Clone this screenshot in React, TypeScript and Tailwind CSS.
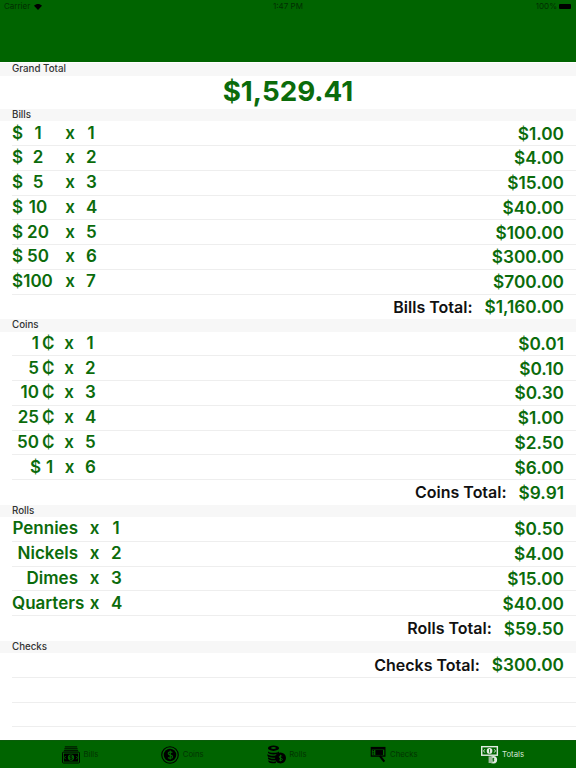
import React from 'react'

const bills = [
  ['1', '1', '$1.00'],
  ['2', '2', '$4.00'],
  ['5', '3', '$15.00'],
  ['10', '4', '$40.00'],
  ['20', '5', '$100.00'],
  ['50', '6', '$300.00'],
  ['100', '7', '$700.00'],
]

const coins = [
  ['1', '2', '$0.01', '1'],
  ['5', '2', '$0.10', '2'],
  ['10', '2', '$0.30', '3'],
  ['25', '2', '$1.00', '4'],
  ['50', '2', '$2.50', '5'],
]

const rolls = [
  ['Pennies', '1', '$0.50'],
  ['Nickels', '2', '$4.00'],
  ['Dimes', '3', '$15.00'],
  ['Quarters', '4', '$40.00'],
]

function SectionHeader({ title }: { title: string }) {
  return (
    <div className="h-[12.25px] bg-[#f7f7f7] pl-3 text-[9.75px] font-medium leading-[12.25px] text-[#333333]">{title}</div>
  )
}

function Row({ children, value }: { children: React.ReactNode; value: string }) {
  return (
    <div className="ml-3 flex h-[24.75px] items-center justify-between border-b border-[#eeeeee] pr-3 leading-none text-[#0b6b0b]">
      <div className="flex items-center text-[17px] font-semibold">{children}</div>
      <div className="text-[17.25px] font-semibold">{value}</div>
    </div>
  )
}

function TotalRow({ label, value, line }: { label: string; value: string; line?: boolean }) {
  return (
    <div className={`ml-3 flex h-[24.75px] items-center justify-end gap-3 pr-3 font-semibold leading-none ${line ? 'border-b border-[#eeeeee]' : ''}`}>
      <span className="text-[16px] text-[#111111]">{label}</span>
      <span className="text-[17.25px] text-[#0b6b0b]">{value}</span>
    </div>
  )
}

function Times({ n, width }: { n: string; width: string }) {
  return (
    <>
      <span className={`text-center ${width}`}>x</span>
      <span className="w-[10px] text-center">{n}</span>
    </>
  )
}

function BillsIcon() {
  return (
    <svg viewBox="0 0 19 19" className="h-[19px] w-[18px]" fill="none" stroke="#000000">
      <path d="M3 1.500h13M2.500 3.500h14M2 5.500h15" strokeWidth="1" />
      <rect x="0.500" y="7" width="18" height="11.500" rx="1" strokeWidth="1" />
      <rect x="2" y="8.500" width="15" height="8.500" fill="#000000" stroke="none" />
      <circle cx="9.500" cy="12.700" r="3.300" fill="#006400" stroke="none" />
      <path d="M4 11l-1.500 1.700L4 14.500M15 11l1.500 1.700L15 14.500" stroke="#006400" strokeWidth="1" />
      <path d="M10.800 11.200c-.8-.7-2.500-.5-2.500.6 0 1.300 2.600.7 2.600 2 0 1.100-1.800 1.200-2.700.5M9.500 10v5.400" stroke="#000000" strokeWidth="0.700" />
    </svg>
  )
}

function CoinsIcon() {
  return (
    <svg viewBox="0 0 19 19" className="h-[18px] w-[18px]" fill="none">
      <circle cx="9.500" cy="9.500" r="8.700" stroke="#000000" strokeWidth="1.200" />
      <circle cx="9.500" cy="9.500" r="6.600" fill="#000000" />
      <path d="M12 6.900c-1.300-1.200-4.400-.9-4.400 1 0 2.300 4.600 1.200 4.600 3.400 0 2-3.200 2.100-4.800.9M9.800 4.800v9.400" stroke="#006400" strokeWidth="1.200" />
    </svg>
  )
}

function RollsIcon() {
  return (
    <svg viewBox="0 0 19 19" className="h-[19px] w-[19px]" fill="none">
      <ellipse cx="6.500" cy="3.200" rx="5.500" ry="2.700" fill="#000000" />
      <ellipse cx="6.500" cy="3" rx="2.400" ry="1" fill="#006400" />
      <path d="M1 6.200c1 2.200 10 2.200 11 0v1.600c-1 2.200-10 2.200-11 0zM.5 9c1 2.200 9 2.400 10 .6v1.800c-1 1.800-9 1.600-10-.4zM1 12c1 2 7 2.200 8 1.200v1.700c-1 1-7 .8-8-1.200zM1.500 15c1 1.800 6 2.100 7.500 1.300V18c-1.500.7-6.500.5-7.500-1.300z" fill="#000000" />
      <circle cx="13.500" cy="13" r="5.500" fill="#000000" />
      <path d="M15.200 11.300c-.8-.8-3-.7-3 .7 0 1.600 3.200.8 3.200 2.300 0 1.400-2.200 1.500-3.300.6M13.500 9.800v6.500" stroke="#006400" strokeWidth="1" />
    </svg>
  )
}

function ChecksIcon() {
  return (
    <svg viewBox="0 0 19 19" className="h-[19px] w-[17px]" fill="none">
      <rect x="0.800" y="1" width="16.500" height="11" fill="#000000" />
      <rect x="2" y="4" width="14" height="6.500" fill="#006400" />
      <path d="M3 5h1.500M3 7h1.500M3 9h1.500" stroke="#000000" strokeWidth="1" />
      <rect x="6" y="4.500" width="8.500" height="5.500" fill="#000000" />
      <path d="M11 11l5 6.500" stroke="#000000" strokeWidth="2.400" />
    </svg>
  )
}

function TotalsIcon() {
  return (
    <svg viewBox="0 0 19 19" className="h-[19px] w-[18px]" fill="none">
      <rect x="0" y="0.500" width="18" height="10.500" fill="#e2ebe2" />
      <rect x="1.500" y="2" width="15" height="7.500" fill="#006400" />
      <circle cx="9" cy="5.700" r="3" fill="#e2ebe2" />
      <path d="M4 4L2.700 5.700 4 7.500M14 4l1.300 1.700L14 7.500" stroke="#e2ebe2" strokeWidth="1" />
      <path d="M9 3.800v3.800" stroke="#006400" strokeWidth="0.900" />
      <circle cx="13" cy="15" r="4" fill="#e2ebe2" />
      <rect x="8" y="11.500" width="4" height="7" fill="#9db99d" />
      <path d="M13 13v4M14 13.700h-1.500v1.300h1v1.300H12" stroke="#006400" strokeWidth="0.800" />
    </svg>
  )
}

function Tab({ icon, label, active }: { icon: React.ReactNode; label: string; active?: boolean }) {
  return (
    <div className="flex items-center gap-[3.5px]">
      {icon}
      <span className={`text-[7.75px] leading-none ${active ? 'text-[#d6e4d6]' : 'text-[#023402]'}`}>{label}</span>
    </div>
  )
}

export default function App() {
  return (
    <div className="flex h-[768px] w-[576px] flex-col overflow-hidden bg-white font-['Inter','Liberation_Sans',sans-serif]">
      <div className="grid h-[62px] grid-cols-3 content-start bg-[#006400] px-1 pt-[1px] text-[8px] leading-[11px] text-[#022f02]">
        <div className="flex items-center gap-[4px]">
          <span>Carrier</span>
          <svg viewBox="0 0 12 9" className="h-[6px] w-[8px]" fill="#000000">
            <path d="M6 9L0 2.500C3.500-.8 8.500-.8 12 2.500z" />
          </svg>
        </div>
        <span className="text-center">1:47 PM</span>
        <div className="flex items-center justify-end gap-[2px]">
          <span>100%</span>
          <div className="mr-[1px] h-[5px] w-[12px] rounded-[1px] bg-black" />
        </div>
      </div>
      <div className="mt-[1.25px]">
        <SectionHeader title="Grand Total" />
        <div className="flex h-[33.5px] items-center justify-center text-[27.75px] font-bold leading-none text-[#0b6b0b]">$1,529.41</div>
        <SectionHeader title="Bills" />
        {bills.map(([amount, n, value]) => (
          <Row key={amount} value={value}>
            <span className="w-[10px]">$</span>
            <span className="w-[32px] text-center">{amount}</span>
            <Times n={n} width="w-[32px]" />
          </Row>
        ))}
        <TotalRow label="Bills Total:" value="$1,160.00" />
        <SectionHeader title="Coins" />
        {coins.map(([amount, , value, n]) => (
          <Row key={amount} value={value}>
            <span className="w-[27px] text-right">{amount}</span>
            <span className="ml-[3px] w-[11px] text-center">₵</span>
            <Times n={n} width="w-[32px]" />
          </Row>
        ))}
        <Row value="$6.00">
          <span className="w-[29px] text-right">$</span>
          <span className="ml-[4px] w-[9px] text-center">1</span>
          <Times n="6" width="w-[31px]" />
        </Row>
        <TotalRow label="Coins Total:" value="$9.91" />
        <SectionHeader title="Rolls" />
        {rolls.map(([name, n, value]) => (
          <Row key={name} value={value}>
            <span className="w-[66px] text-right">{name}</span>
            <Times n={n} width="w-[33px]" />
          </Row>
        ))}
        <TotalRow label="Rolls Total:" value="$59.50" />
        <SectionHeader title="Checks" />
        <TotalRow label="Checks Total:" value="$300.00" line />
        <div className="ml-3 h-[24.75px] border-b border-[#eeeeee]" />
        <div className="ml-3 h-[24.75px] border-b border-[#eeeeee]" />
      </div>
      <div className="mt-auto flex h-[28px] items-center gap-[63px] border-t border-[#0a5c0a] bg-[#006400] pl-[62px]">
        <Tab icon={<BillsIcon />} label="Bills" />
        <Tab icon={<CoinsIcon />} label="Coins" />
        <Tab icon={<RollsIcon />} label="Rolls" />
        <Tab icon={<ChecksIcon />} label="Checks" />
        <Tab icon={<TotalsIcon />} label="Totals" active />
      </div>
    </div>
  )
}
